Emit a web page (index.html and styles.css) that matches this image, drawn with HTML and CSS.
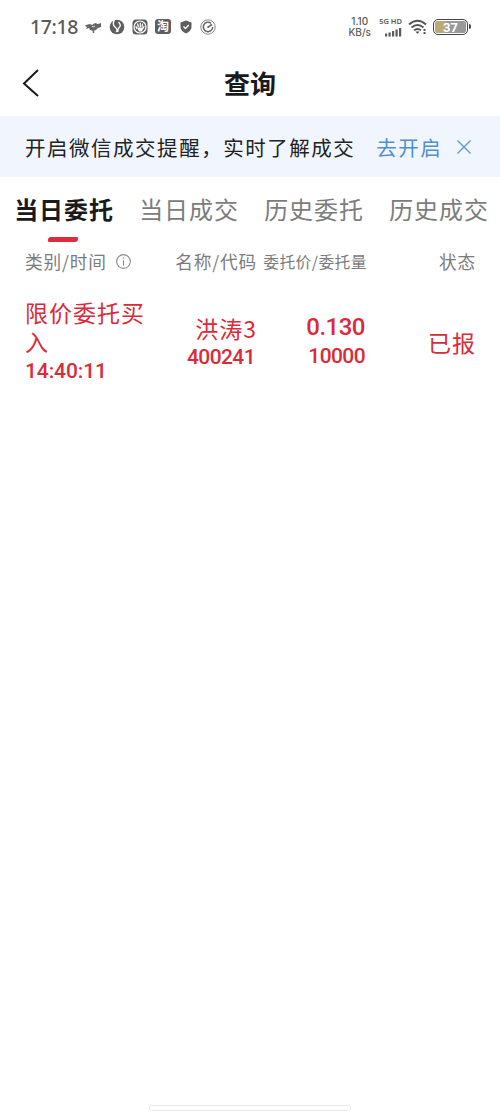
FILE: index.html
```html
<!DOCTYPE html>
<html lang="zh-CN">
<head>
  <meta charset="UTF-8" />
  <meta name="viewport" content="width=device-width, initial-scale=1.0"/>
  <title>查询</title>
  <link rel="stylesheet" href="styles.css">
</head>
<body>

  <div class="status-bar">
    <span class="clock">17:18</span>
    <div class="notices">
      <svg width="17" height="16" viewBox="0 0 17 16" fill="#666"><path d="M1 6l4-1 2 1 3-2 3 1 3-1v4l-3 1-2 2-3 1-3-1-1-2-3 1 1-2-2-1z"/><path d="M7 7l1 1 2-1" fill="none" stroke="#ddd"/><circle cx="8.500" cy="13" r="1"/></svg>
      <svg width="16" height="16" viewBox="0 0 16 16"><circle cx="8" cy="8" r="7.300" fill="#5e5e5e"/><path d="M6 0Q2.500 5 6 8t1 5M9.500 3q3 3 1 5t-1.500 5" fill="none" stroke="#fff" stroke-width="1.300"/></svg>
      <svg width="16" height="16" viewBox="0 0 16 16"><rect x=".5" y=".5" width="15" height="15" rx="3.500" fill="#5e5e5e"/><circle cx="8" cy="8" r="6" fill="none" stroke="#fff" stroke-width="1.200"/><path d="M5 10L3.800 7M6.500 8L5.500 4.500M8.300 8V3.800M10 8l.6-3.500M11 9.500l1.200-2.500" stroke="#fff" stroke-width="1.200"/><path d="M5 8.500h6.500l-1.500 4h-3z" fill="#fff"/></svg>
      <span class="tao">淘</span>
      <svg class="shield" width="12" height="14" viewBox="0 0 12 14"><path d="M6 .5l5.500 2v4.500c0 3-2.300 5-5.500 6.500C2.800 12 .5 10 .5 7V2.500z" fill="#5e5e5e"/><path d="M3.500 6.500l2 2 3.300-3.500" fill="none" stroke="#fff" stroke-width="1.300"/></svg>
      <svg width="16" height="16" viewBox="0 0 16 16" fill="none" stroke="#666"><circle cx="8" cy="8" r="7.200" stroke="#888" stroke-width="1"/><path d="M11 4.300A4.700 4.700 0 1 0 12.700 8" stroke-width="1.500"/><path d="M7.500 8.500l4.500-3" stroke-width="1.600"/></svg>
    </div>
    <div class="speed"><div>1.10</div><div>KB/s</div></div>
    <div class="signal">
      <span>5G HD</span>
      <svg width="17" height="9" viewBox="0 0 17 9" fill="#5a5a5a"><rect x="0" y="5.500" width="2.200" height="3"/><rect x="3.500" y="4.500" width="2.200" height="4"/><rect x="7" y="3" width="2.200" height="5.500"/><rect x="10.500" y="1.500" width="2.200" height="7"/><rect x="14" y="0" width="2.200" height="8.500"/></svg>
    </div>
    <svg class="wifi" width="20" height="16" viewBox="0 0 20 16" fill="none" stroke="#555" stroke-width="1.900"><path d="M1 5.500Q9.500-2 18 5.500M3.500 8.500q6-5 12 0M6 11.300q3.500-2.800 7 0"/><path d="M7.500 12.500h4L9.500 15z" fill="#555" stroke="none"/><path d="M16.500 10v2M16.500 13v2" stroke-width="2"/></svg>
    <div class="battery"><span>37</span></div>
  </div>

  <div class="header">
    <svg class="back" width="18" height="30" viewBox="0 0 18 30"><path d="M16 2L2 15.500 16 28" fill="none" stroke="#1a1a1a" stroke-width="2"/></svg>
    <h1>查询</h1>
  </div>

  <div class="banner">
    <span>开启微信成交提醒，实时了解成交</span>
    <a class="open">去开启</a>
    <svg width="14" height="14" viewBox="0 0 14 14"><path d="M.5.5l13 13M13.500.5l-13 13" stroke="#5b94cf" stroke-width="1.300"/></svg>
  </div>

  <div class="tabs">
    <div class="tab active">当日委托</div>
    <div class="tab">当日成交</div>
    <div class="tab">历史委托</div>
    <div class="tab">历史成交</div>
  </div>

  <div class="row head">
    <div class="type">类别/时间
      <svg width="15" height="15" viewBox="0 0 14 14" fill="none" stroke="#888"><circle cx="7" cy="7" r="6.400"/><path d="M7 3.200v1.300M7 5.800v5"/></svg>
    </div>
    <div class="name">名称/代码</div>
    <div class="price">委托价/委托量</div>
    <div class="state">状态</div>
  </div>

  <div class="row order">
    <div class="type">限价委托买入<div class="num time">14:40:11</div></div>
    <div class="name">洪涛3<div class="num">400241</div></div>
    <div class="price"><div class="num big">0.130</div><div class="num">10000</div></div>
    <div class="state">已报</div>
  </div>

  <div class="home-bar"></div>

</body>
</html>
```

FILE: styles.css
```css
* { box-sizing: border-box; }
body { margin: 0; height: 1111px; display: flex; flex-direction: column; background: #fff; font-family: "Noto Sans CJK SC", sans-serif; overflow: hidden; }

.status-bar { height: 53px; display: flex; align-items: center; padding: 0 30px; color: #5a5a5a; font-family: "Noto Sans", sans-serif; }
.clock { width: 55px; font-size: 19.5px; font-weight: 500; letter-spacing: -0.4px; }
.notices { display: flex; align-items: center; gap: 7px; flex: 1; }
.notices svg { flex: none; }
.notices .shield { margin: 0 1px 0 2px; }
.tao { width: 16px; height: 15px; border-radius: 3px; background: #5e5e5e; color: #fff; font: bold 12px/14px "Noto Sans CJK SC", sans-serif; text-align: center; }
.speed { display: flex; flex-direction: column; gap: 1px; margin-right: 7px; font: 500 10px/10px Inter, sans-serif; text-align: center; white-space: nowrap; }
.speed div { height: 10px; }
.signal { width: 24px; display: flex; flex-direction: column; align-items: flex-end; gap: 2px; margin-right: 6px; font-size: 7.5px; line-height: 9px; font-weight: 600; white-space: nowrap; }
.wifi { margin-right: 5px; }
.battery { position: relative; width: 35px; height: 16px; margin-right: 2px; border: 1.5px solid #444; border-radius: 5px; padding: 1px; }
.battery span { display: block; height: 12px; border-radius: 2px; background: linear-gradient(90deg, #bda878 37%, #999 37%); color: #fff; font: bold 13px/13px Roboto, sans-serif; text-align: center; }
.battery::after { content: ""; position: absolute; right: -4px; top: 4px; width: 2px; height: 5px; background: #444; border-radius: 0 2px 2px 0; }

.header { height: 63px; display: grid; grid-template-columns: 60px 1fr 60px; align-items: center; padding-bottom: 4px; }
.back { margin-left: 22px; }
h1 { margin: 0; font-size: 26px; line-height: 36px; font-weight: 700; text-align: center; color: #1a1a1a; }

.banner { height: 61px; display: flex; align-items: center; padding: 0 25px; background: #f1f6fe; font-size: 20.5px; letter-spacing: 1.52px; color: #222; white-space: nowrap; }
.banner .open { margin-left: 21px; margin-right: 15px; color: #4f8fd0; }

.tabs { height: 66px; display: flex; gap: 25px; padding: 0 14px; overflow: hidden; }
.tab { flex: none; width: 100px; display: flex; flex-direction: column; align-items: center; font-size: 24px; line-height: 64px; letter-spacing: 0.9px; color: #7c7c7c; white-space: nowrap; }
.tab.active { color: #1a1a1a; font-weight: 700; }
.tab.active::after { content: ""; width: 30px; height: 5px; margin: -4px 3px 0 0; border-radius: 2px; background: #df2b3b; transform: skewX(-15deg); }

.row { display: grid; grid-template-columns: 126px 106px 110px 109px; padding: 0 24px 0 25px; }
.name, .price, .state { text-align: right; white-space: nowrap; }
.head { height: 36px; align-items: center; font-size: 17.7px; letter-spacing: 0.8px; color: #7c7c7c; }
.head .type { display: flex; align-items: center; gap: 9px; }
.head .price { font-size: 15.8px; letter-spacing: 0.4px; }

.order { height: 90px; margin-top: 18px; align-items: center; font-size: 23px; line-height: 29px; letter-spacing: 1px; color: #d92b39; }
.order .type { line-height: 28.5px; }
.order .name { padding-top: 1px; }
.num { margin-right: 2px; font-family: Roboto, sans-serif; font-size: 21px; font-weight: 500; letter-spacing: -0.6px; }
.time { padding-top: 2px; letter-spacing: -0.1px; }
.num.big { font-size: 24px; letter-spacing: -0.5px; }

.home-bar { width: 202px; height: 6px; margin: auto auto 0; border: 1px solid #eaeaea; border-radius: 2px; }
```
